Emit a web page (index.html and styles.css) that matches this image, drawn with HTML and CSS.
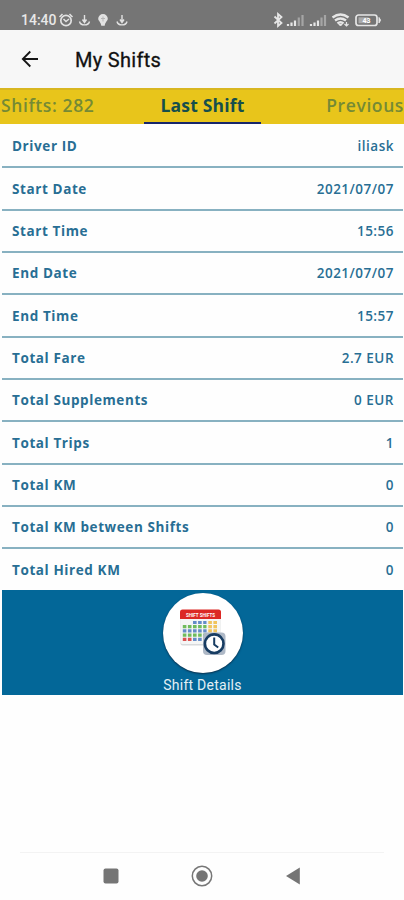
FILE: index.html
```
<!DOCTYPE html>
<html lang="en">
<head>
    <meta charset="UTF-8">
    <meta name="viewport" content="width=device-width, initial-scale=1.0">
    <title>My Shifts</title>
    <link rel="stylesheet" href="styles.css">
</head>
<body>

    <div class="status-bar">
        <span class="clock">14:40</span>
        <svg class="status-left" width="72" height="16" viewBox="0 0 72 16" fill="none" stroke="#e2e2e2">
            <!-- alarm -->
            <circle cx="8" cy="8.500" r="5.200" stroke-width="1.700"/>
            <path d="M1.500 5L4.500 2M14.500 5L11.500 2M5.500 7l2.500 2.500L11 7" stroke-width="1.500"/>
            <!-- download -->
            <path d="M26.500 3v7M24.500 7.500l2 3 2-3M21.500 9.500c1 4.500 9 4.500 10 0" stroke-width="1.400"/>
            <!-- pin -->
            <path d="M45 2a4.800 4.800 0 0 1 4.800 4.800c0 2-2.600 3.200-3.100 7h-3.400c-.5-3.800-3.100-5-3.100-7A4.800 4.800 0 0 1 45 2z" fill="#e2e2e2" stroke="none"/>
            <path d="M45 4.500v5M43 6.500h4" stroke="#b5b5b5" stroke-width="1"/>
            <path d="M64 3v7M62 7.500l2 3 2-3M59 9.500c1 4.500 9 4.500 10 0" stroke-width="1.400"/>
        </svg>
        <svg class="status-right" width="112" height="16" viewBox="0 0 112 16" fill="none" stroke="#e6e6e6">
            <!-- bluetooth -->
            <path d="M2.500 4.500l7 6.500L6 14V2l3.500 3-7 6.500" stroke-width="1.800"/>
            <!-- signal -->
            <path d="M16 14v-2M19.500 14v-3.500M23 14V8.500" stroke-width="2.200"/>
            <path d="M26.800 14V5.500M30.500 14V3" stroke="#a5a5a5" stroke-width="2.200"/>
            <path d="M39 14v-2M42.500 14v-3.500M46 14V8.500" stroke-width="2.200"/>
            <path d="M49.500 14V5.500M53 14V3" stroke="#a5a5a5" stroke-width="2.200"/>
            <!-- wifi -->
            <path d="M60.500 5.500q8-6 16 0M63 8.500q5.500-4 11 0M65.500 11.500q3-2.500 6 0" stroke-width="2.400"/>
            <path d="M67 12.500h3L68.500 14z" fill="#e6e6e6"/>
            <path d="M74.500 10v4M72.500 12l2 2 2-2" stroke-width="1.200"/>
            <!-- battery -->
            <rect x="84" y="3" width="21" height="10.500" rx="2.500" stroke-width="1.700"/>
            <path d="M107 5.500q3 2.700 0 5.400z" fill="#e6e6e6" stroke-width="1"/>
            <rect x="86.500" y="5.300" width="10" height="6" fill="#aaa" stroke="none"/>
            <text x="94.500" y="11.300" class="battery-text">43</text>
        </svg>
    </div>

    <div class="header">
        <svg class="back-arrow" width="18" height="18" viewBox="0 0 18 18" fill="none" stroke="#151515" stroke-width="1.8">
            <path d="M17 9H2M9.300 1.500L1.800 9l7.500 7.500"/>
        </svg>
        <h1>My Shifts</h1>
    </div>

    <div class="tabs">
        <div class="tab tab-first">Shifts: 282</div>
        <div class="tab active">Last Shift</div>
        <div class="tab tab-last">Previous</div>
    </div>

    <div class="shift">
        <div class="row"><span class="label">Driver ID</span><span class="value">iliask</span></div>
        <div class="row"><span class="label">Start Date</span><span class="value">2021/07/07</span></div>
        <div class="row"><span class="label">Start Time</span><span class="value">15:56</span></div>
        <div class="row"><span class="label">End Date</span><span class="value">2021/07/07</span></div>
        <div class="row"><span class="label">End Time</span><span class="value">15:57</span></div>
        <div class="row"><span class="label">Total Fare</span><span class="value">2.7 EUR</span></div>
        <div class="row"><span class="label">Total Supplements</span><span class="value">0 EUR</span></div>
        <div class="row"><span class="label">Total Trips</span><span class="value">1</span></div>
        <div class="row"><span class="label">Total KM</span><span class="value">0</span></div>
        <div class="row"><span class="label">Total KM between Shifts</span><span class="value">0</span></div>
        <div class="row"><span class="label">Total Hired KM</span><span class="value">0</span></div>
    </div>

    <div class="details">
        <div class="details-btn">
            <svg width="46" height="47" viewBox="0 0 46 47">
                <!-- calendar -->
                <rect x=".5" y="2" width="40" height="34.500" rx="2" fill="#d8dadc"/>
                <rect x=".5" y="2" width="40" height="33" rx="2" fill="#f5f6f6"/>
                <path d="M0 10V3q0-2.500 2.500-2.500h36Q41 .5 41 3v7z" fill="#dc2824"/>
                <text x="20.500" y="7.500" class="calendar-text">SHIFT SHIFTS</text>
                <g fill="none" stroke-width="3.200" stroke-dasharray="3.600 1.500">
                    <path d="M13 13.500h13.500" stroke="#648cc8"/>
                    <path d="M28.300 13.500h9" stroke="#f0c45c"/>
                    <path d="M2.800 17.700h8.800" stroke="#70bc5c"/>
                    <path d="M13 17.700h13.500" stroke="#70bc5c"/>
                    <path d="M28.300 17.700h9" stroke="#f0c45c"/>
                    <path d="M2.800 21.900h23.800" stroke="#648cc8"/>
                    <path d="M28.300 21.900h9" stroke="#f0c45c"/>
                    <path d="M2.800 26.100h23.800" stroke="#70bc5c"/>
                    <path d="M2.800 30.300h8.800" stroke="#dc5050"/>
                    <path d="M13 30.300h13.500" stroke="#648cc8"/>
                </g>
                <!-- clock -->
                <rect x="23" y="23.500" width="22.500" height="22.500" rx="4" fill="#aeb8c6"/>
                <circle cx="34.200" cy="34.700" r="9.300" fill="#fff" stroke="#173c62" stroke-width="2.600"/>
                <path d="M34.200 28.500v7l4 3" fill="none" stroke="#173c62" stroke-width="2"/>
            </svg>
        </div>
        <div class="details-label">Shift Details</div>
    </div>

    <div class="nav-bar">
        <svg width="22" height="22" viewBox="0 0 22 22"><rect x="3.500" y="3.500" width="15" height="15" rx="2" fill="#757575"/></svg>
        <svg width="22" height="22" viewBox="0 0 22 22">
            <circle cx="11" cy="11" r="9.700" fill="none" stroke="#777" stroke-width="1.500"/>
            <circle cx="11" cy="11" r="5.800" fill="#757575"/>
        </svg>
        <svg width="22" height="22" viewBox="0 0 22 22"><path d="M4 11L17.800 2.500v17z" fill="#757575"/></svg>
    </div>

</body>
</html>
```
FILE: styles.css
```
* {
    box-sizing: border-box;
}
body {
    font-family: 'Open Sans', sans-serif;
    margin: 0;
    height: 900px;
    display: flex;
    flex-direction: column;
    background: #fefefe;
    overflow: hidden;
}
.status-bar {
    height: 30px;
    padding: 10px 20px 0 21px;
    display: flex;
    align-items: center;
    background: #757575;
    color: #e8e8e8;
}
.clock {
    width: 36px;
    font-family: Roboto, sans-serif;
    font-size: 14px;
    font-weight: 500;
    line-height: 16px;
}
.status-left {
    margin-left: 1px;
}
.status-right {
    margin-left: auto;
}
.battery-text {
    font-family: Roboto, sans-serif;
    font-size: 7px;
    font-weight: 700;
    fill: #fff;
    stroke: none;
    text-anchor: middle;
}
.header {
    height: 58px;
    padding-left: 21px;
    display: flex;
    align-items: center;
    background: #f7f7f7;
}
h1 {
    margin: 1px 0 0 36px;
    font-family: Roboto, sans-serif;
    font-size: 20px;
    font-weight: 400;
    letter-spacing: 0.3px;
    color: #111;
    -webkit-text-stroke: 0.3px #111;
}
.tabs {
    height: 36px;
    display: grid;
    grid-template-columns: 144px 117px 143px;
    background: #e8c51b;
    border-top: 2px solid #d8b620;
}
.tab {
    font-size: 17.5px;
    font-weight: 600;
    line-height: 30px;
    letter-spacing: 0.6px;
    color: #758a35;
    white-space: nowrap;
}
.tab-first {
    padding-left: 1px;
}
.tab.active {
    font-weight: 700;
    letter-spacing: 0.2px;
    text-align: center;
    color: #164f4c;
    border-bottom: 2px solid #17266b;
}
.tab-last {
    text-align: right;
}
.shift {
    height: 466px;
    margin: 0 1px 0 2px;
    padding-top: 2px;
    display: grid;
    grid-template-rows: repeat(10, 42.35px) 1fr;
}
.row {
    padding: 0 9px 0 10px;
    display: flex;
    justify-content: space-between;
    align-items: center;
    border-bottom: 2px solid #88b1c1;
    font-size: 13.5px;
    color: #286e94;
}
.row:last-child {
    border-bottom: none;
}
.label {
    font-weight: 700;
    letter-spacing: 0.6px;
}
.value {
    font-weight: 600;
    letter-spacing: 0.5px;
}
.details {
    height: 105px;
    margin: 0 1px 0 2px;
    padding-top: 3px;
    display: flex;
    flex-direction: column;
    align-items: center;
    background: #036798;
}
.details-btn {
    width: 80px;
    height: 80px;
    padding: 16px 0 0 17px;
    border-radius: 50%;
    background: #fff;
    box-shadow: 0 1px 2px #092e4a;
}
.calendar-text {
    font-family: Roboto, sans-serif;
    font-size: 4.5px;
    font-weight: 700;
    fill: #fff;
    text-anchor: middle;
}
.details-label {
    margin-top: 4px;
    font-family: Roboto, sans-serif;
    font-size: 14px;
    line-height: 16px;
    letter-spacing: 0.25px;
    color: #e3f0f5;
}
.nav-bar {
    height: 48px;
    margin: auto 20px 0;
    padding: 0 80px 2px;
    display: flex;
    justify-content: space-between;
    align-items: center;
    border-top: 1px solid #f3f3f3;
}
```
